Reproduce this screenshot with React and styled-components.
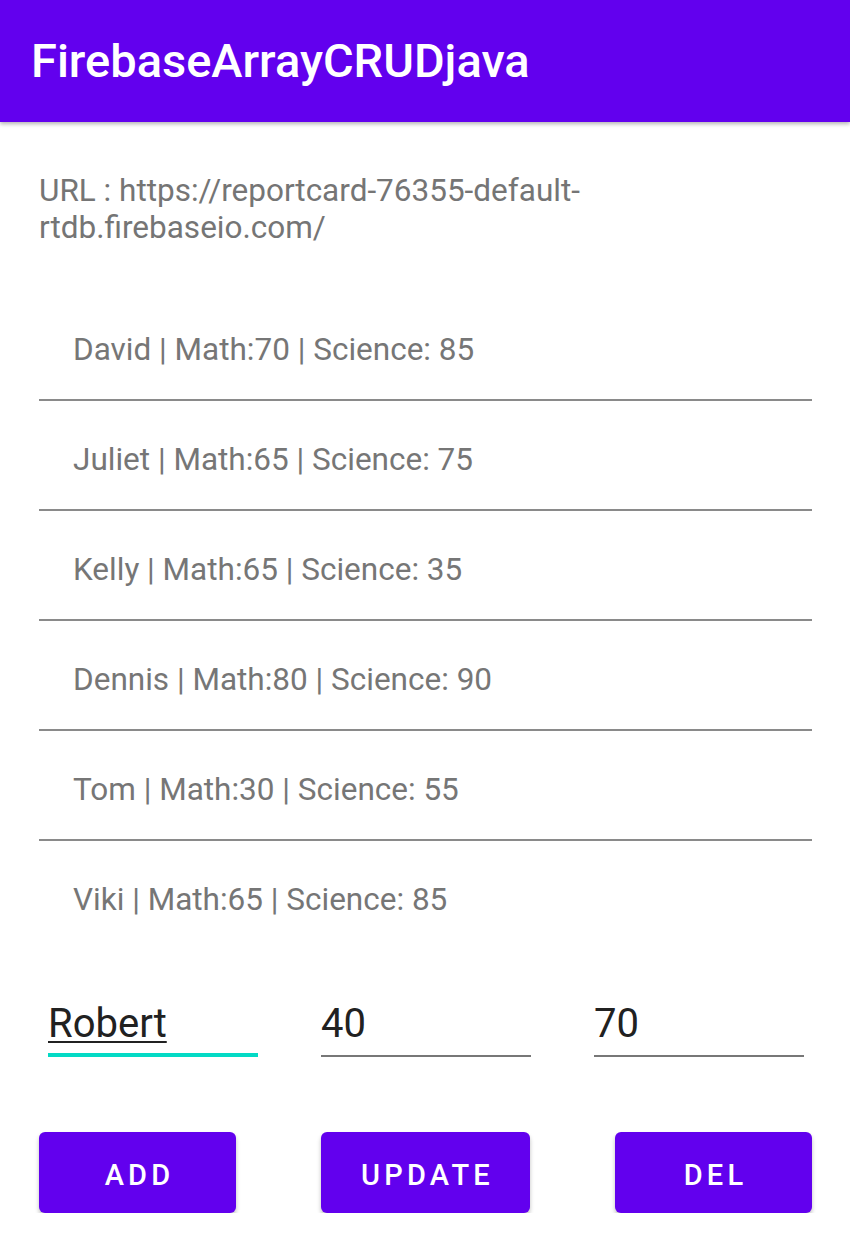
import React from 'react';
import styled, { createGlobalStyle } from 'styled-components';

const GlobalStyle = createGlobalStyle`
  html, body {
    margin: 0;
    padding: 0;
    background: #fff;
    font-family: Roboto, "Noto Sans", sans-serif;
  }
`;

// Top app bar
const AppBar = styled.header`
  height: 122px;
  background-color: #6200ee;
  display: flex;
  align-items: center;
  padding-left: 31px;
  box-shadow: 0 2px 4px rgba(0, 0, 0, 0.3);
  position: relative;
  z-index: 1;
`;

const Title = styled.h1`
  margin: 0;
  margin-top: -1px;
  color: #fff;
  font-size: 47px;
  font-weight: 500;
`;

const Content = styled.main`
  padding: 0 38px 0 39px;
`;

const UrlText = styled.p`
  margin: 0;
  padding-top: 50px;
  width: 600px;
  font-size: 31.5px;
  line-height: 37px;
  color: #757575;
`;

const List = styled.ul`
  list-style: none;
  margin: 45px 0 0;
  padding: 0;
`;

const Item = styled.li`
  display: flex;
  align-items: center;
  padding: 8px 0 0 34px;
  box-sizing: border-box;
  font-size: 31.5px;
  color: #767676;
  border-bottom: ${(p) => (p.$last ? 'none' : '2px solid #8a8a8a')};
  height: ${(p) => (p.$last ? '108px' : '110px')};
`;

const InputRow = styled.div`
  display: flex;
  justify-content: space-between;
  padding: 0 8px 0 9px;
  margin-top: 48px;
`;

const Field = styled.div`
  width: 210px;
  height: 60px;
  box-sizing: border-box;
  border-bottom: ${(p) => (p.$focused ? '4px solid #03dac5' : '2px solid #777')};
  font-size: 40px;
  color: #212121;
  line-height: 54px;
`;

const Typed = styled.span`
  text-decoration: ${(p) => (p.$spell ? 'underline' : 'none')};
  text-decoration-thickness: 2px;
  text-underline-offset: 4px;
`;

const ButtonRow = styled.div`
  display: flex;
  justify-content: space-between;
  margin-top: 75px;
`;

const Button = styled.button`
  width: ${(p) => p.$w}px;
  height: 81px;
  border: none;
  border-radius: 6px;
  background-color: #6200ee;
  color: #fff;
  font-family: Roboto, sans-serif;
  font-size: 29px;
  font-weight: 500;
  letter-spacing: 4.2px;
  padding: 4px 0 0 4px;
  box-shadow: 0 3px 4px rgba(0, 0, 0, 0.25);
`;

const students = [
  'David | Math:70 | Science: 85',
  'Juliet | Math:65 | Science: 75',
  'Kelly | Math:65 | Science: 35',
  'Dennis | Math:80 | Science: 90',
  'Tom | Math:30 | Science: 55',
  'Viki | Math:65 | Science: 85',
];

const App = () => {
  return (
    <>
      <GlobalStyle />
      <AppBar>
        <Title>FirebaseArrayCRUDjava</Title>
      </AppBar>
      <Content>
        <UrlText>
          URL : https://reportcard-76355-default-rtdb.firebaseio.com/
        </UrlText>
        <List>
          {students.map((s, i) => (
            <Item key={s} $last={i === students.length - 1}>
              {s}
            </Item>
          ))}
        </List>
        <InputRow>
          <Field $focused>
            <Typed $spell>Robert</Typed>
          </Field>
          <Field>
            <Typed>40</Typed>
          </Field>
          <Field>
            <Typed>70</Typed>
          </Field>
        </InputRow>
        <ButtonRow>
          <Button $w={197}>ADD</Button>
          <Button $w={209}>UPDATE</Button>
          <Button $w={197}>DEL</Button>
        </ButtonRow>
      </Content>
    </>
  );
};

export default App;
